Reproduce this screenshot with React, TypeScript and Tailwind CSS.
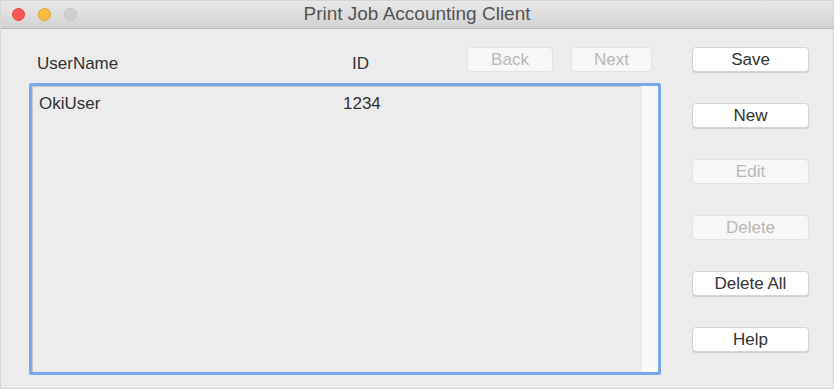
const Btn = ({ label, disabled, className = "" }: { label: string; disabled?: boolean; className?: string }) => (
  <div
    className={`flex items-center justify-center h-[25px] rounded-[4px] border text-[17px] ${
      disabled
        ? "bg-[#f6f6f6] border-[#e2e2e2] text-[#b9b9b9]"
        : "bg-white border-[#d4d4d4] text-[#333] shadow-[0_1px_1px_rgba(0,0,0,0.12)]"
    } ${className}`}
  >
    {label}
  </div>
);

export default function App() {
  return (
    <div
      className="w-[834px] h-[389px] flex flex-col bg-[#ececec] border border-[#d6d6d6] overflow-hidden"
      style={{ fontFamily: '"Liberation Sans", Arial, sans-serif' }}
    >
      <div className="relative h-[28px] flex items-center shrink-0 bg-gradient-to-b from-[#e8e8e8] to-[#d3d3d3] border-b border-[#b9b9b9]">
        <div className="flex gap-[13px] pl-[11px]">
          <span className="w-[13px] h-[13px] rounded-full bg-[#fc5753] border border-[#df4744]" />
          <span className="w-[13px] h-[13px] rounded-full bg-[#fdbc40] border border-[#de9f34]" />
          <span className="w-[13px] h-[13px] rounded-full bg-[#d0d0d0] border border-[#c2c2c2]" />
        </div>
        <div className="absolute inset-0 flex items-center justify-center text-[19px] text-[#555]">
          Print Job Accounting Client
        </div>
      </div>

      <div className="flex pl-[28px] pt-[18px]">
        <div className="w-[632px] flex flex-col">
          <div className="flex items-center h-[25px] text-[17px] text-[#333]">
            <span className="pl-[8px] w-[323px] mt-[8px]">UserName</span>
            <span className="w-[115px] mt-[8px]">ID</span>
            <Btn label="Back" disabled className="w-[86px]" />
            <Btn label="Next" disabled className="w-[81px] ml-[18px]" />
          </div>
          <div className="mt-[11px] h-[292px] border-[3px] border-[#7aa7e8] rounded-[2px] flex">
            <div className="flex-1 border-t border-l border-[#c8c8c8] flex flex-col">
              <div className="flex text-[17px] text-[#333] pt-[4px]">
                <span className="pl-[6px] w-[310px]">OkiUser</span>
                <span>1234</span>
              </div>
            </div>
            <div className="w-[17px] bg-[#fafafa] border-l border-[#ededed]" />
          </div>
        </div>

        <div className="ml-[31px] w-[117px] flex flex-col gap-[31px]">
          <Btn label="Save" />
          <Btn label="New" />
          <Btn label="Edit" disabled />
          <Btn label="Delete" disabled />
          <Btn label="Delete All" />
          <Btn label="Help" />
        </div>
      </div>
    </div>
  );
}
